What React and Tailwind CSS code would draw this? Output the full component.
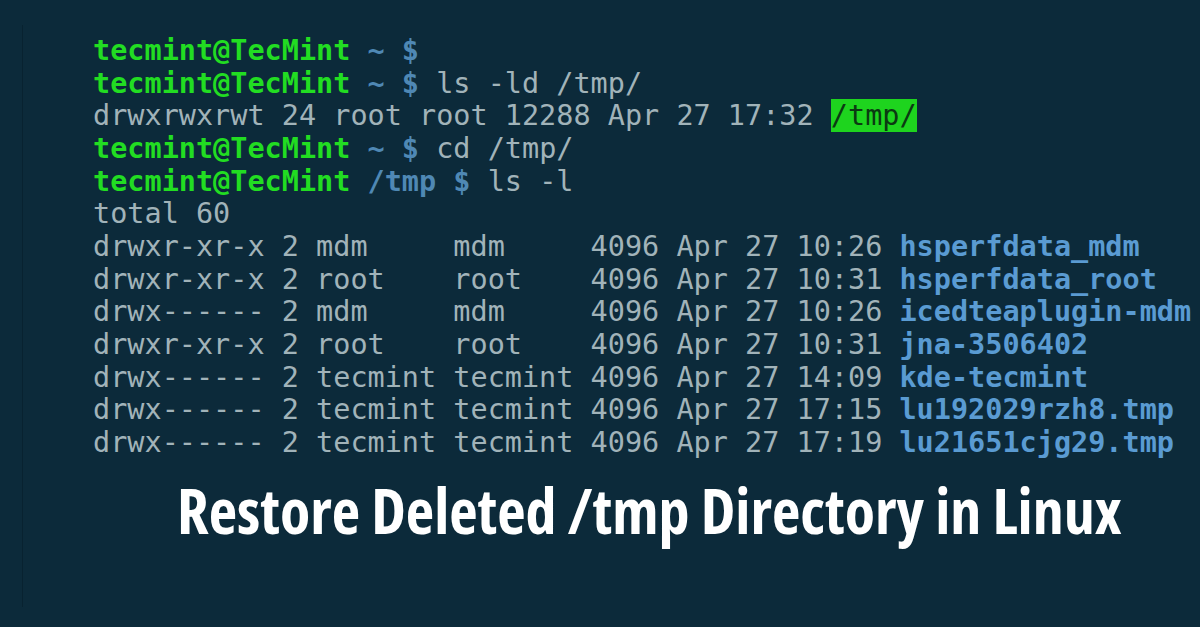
import React from 'react'

const G = 'text-[#22dd22] font-bold'
const B = 'text-[#4f88b4] font-bold'
const T = 'text-[#a1b3b9]'
const F = 'text-[#5a9bd2] font-bold'

const LISTING = [
  ['drwxr-xr-x 2 mdm     mdm     4096 Apr 27 10:26 ', 'hsperfdata_mdm'],
  ['drwxr-xr-x 2 root    root    4096 Apr 27 10:31 ', 'hsperfdata_root'],
  ['drwx------ 2 mdm     mdm     4096 Apr 27 10:26 ', 'icedteaplugin-mdm'],
  ['drwxr-xr-x 2 root    root    4096 Apr 27 10:31 ', 'jna-3506402'],
  ['drwx------ 2 tecmint tecmint 4096 Apr 27 14:09 ', 'kde-tecmint'],
  ['drwx------ 2 tecmint tecmint 4096 Apr 27 17:15 ', 'lu192029rzh8.tmp'],
  ['drwx------ 2 tecmint tecmint 4096 Apr 27 17:19 ', 'lu21651cjg29.tmp'],
]

function Prompt({ dir = '~', cmd }) {
  return (
    <div>
      <span className={G}>tecmint@TecMint</span>
      <span className={B}>{` ${dir} $`}</span>
      {cmd && <span className={T}>{` ${cmd}`}</span>}
    </div>
  )
}

export default function App() {
  return (
    <div className="w-[1200px] h-[627px] overflow-hidden bg-[#0c2a3a]">
      <div className="ml-[22px] mt-[25px] h-[582px] border-l border-[#082230] pl-[70px]">
        {/* terminal session */}
        <div className="pt-[10px] whitespace-pre font-['DejaVu_Sans_Mono',monospace] text-[28.5px] leading-[32.67px]">
          <Prompt />
          <Prompt cmd="ls -ld /tmp/" />
          <div className={T}>
            drwxrwxrwt 24 root root 12288 Apr 27 17:32{' '}
            <span className="bg-[#1ed41e] text-[#0b3a12]">/tmp/</span>
          </div>
          <Prompt cmd="cd /tmp/" />
          <Prompt dir="/tmp" cmd="ls -l" />
          <div className={T}>total 60</div>
          {LISTING.map(([meta, name]) => (
            <div key={name}>
              <span className={T}>{meta}</span>
              <span className={F}>{name}</span>
            </div>
          ))}
        </div>

        <h1 className="mt-[14px] pl-[84px] font-['Open_Sans',sans-serif] font-bold text-[62px] leading-[72px] text-white [font-stretch:75%]">
          Restore Deleted /tmp Directory in Linux
        </h1>
      </div>
    </div>
  )
}
